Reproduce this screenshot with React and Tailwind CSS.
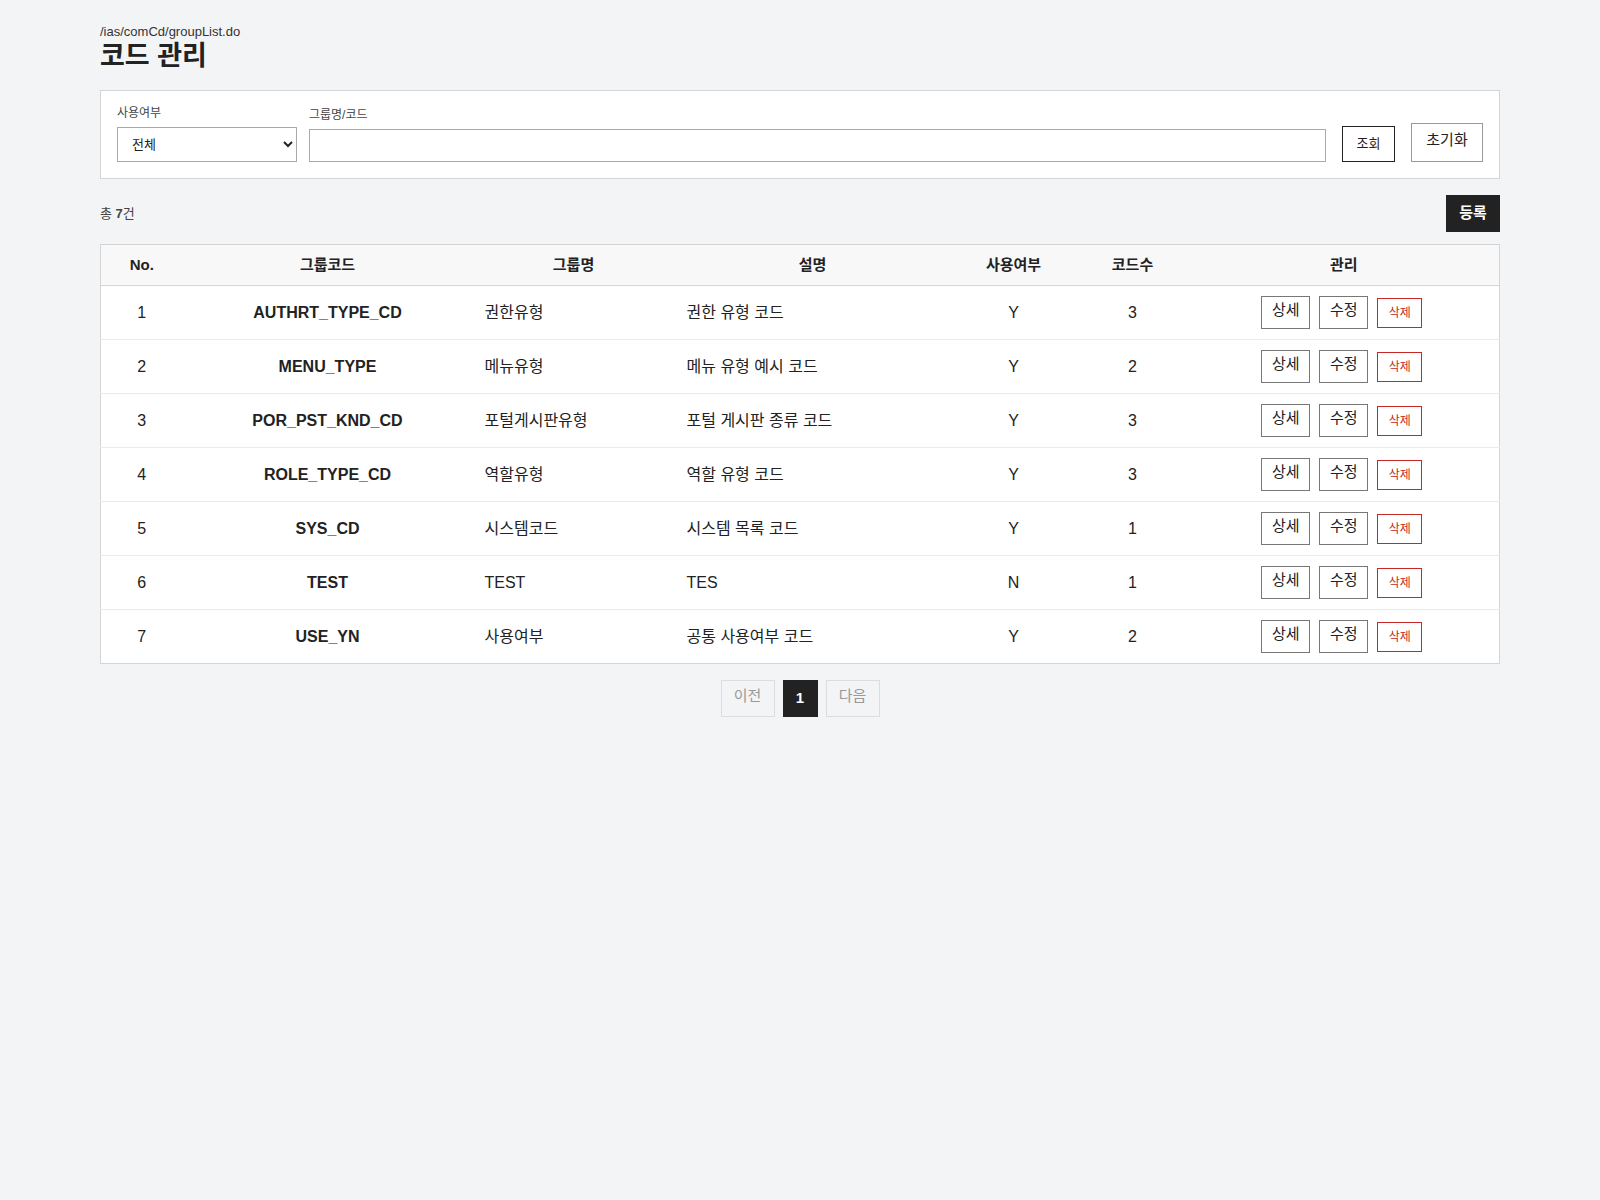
const rows = [
  [1, 'AUTHRT_TYPE_CD', '권한유형', '권한 유형 코드', 'Y', 3],
  [2, 'MENU_TYPE', '메뉴유형', '메뉴 유형 예시 코드', 'Y', 2],
  [3, 'POR_PST_KND_CD', '포털게시판유형', '포털 게시판 종류 코드', 'Y', 3],
  [4, 'ROLE_TYPE_CD', '역할유형', '역할 유형 코드', 'Y', 3],
  [5, 'SYS_CD', '시스템코드', '시스템 목록 코드', 'Y', 1],
  [6, 'TEST', 'TEST', 'TES', 'N', 1],
  [7, 'USE_YN', '사용여부', '공통 사용여부 코드', 'Y', 2],
];

export default function App() {
  return (
    <div className="min-h-[1200px] bg-[#f3f4f6] text-[#222] font-[Liberation_Sans,Noto_Sans_CJK_KR,sans-serif]">
      <div className="mx-auto w-[1400px] pt-6">
        <div className="text-[13px] leading-4 text-[#333]">/ias/comCd/groupList.do</div>
        <h1 className="text-[27px] font-bold leading-8">코드 관리</h1>

        <div className="mt-[18px] bg-white border border-[#d4d4d4] px-4 pt-3.5 pb-4 flex items-end gap-3">
          <div className="flex flex-col w-[180px]">
            <label className="text-[12px] leading-4 text-[#444] mb-1.5">사용여부</label>
            <select className="h-[35px] border border-[#aaa] px-2.5 text-[13px] bg-white">
              <option>전체</option>
            </select>
          </div>
          <div className="flex flex-col flex-1">
            <label className="text-[12px] leading-4 text-[#444] mb-1.5">그룹명/코드</label>
            <input className="h-[33px] border border-[#aaa] px-2" />
          </div>
          <button className="ml-1 h-[36px] w-[53px] border border-[#222] text-[13px] bg-white">조회</button>
          <button className="ml-1 h-[39px] w-[72px] border border-[#999] text-[15px] bg-white pb-1">초기화</button>
        </div>

        <div className="mt-4 flex items-center justify-between">
          <div className="text-[13px] text-[#444]">총 <b>7</b>건</div>
          <button className="h-[37px] w-[54px] bg-[#222] text-white text-[15px] font-bold">등록</button>
        </div>

        <table className="mt-3 w-full border border-[#d4d4d4] bg-white border-collapse text-[16px]">
          <thead>
            <tr className="bg-[#f8f8f8] h-[41px] border-b border-[#d4d4d4] text-[15px] font-bold">
              <th className="w-[82px]">No.</th>
              <th className="w-[290px]">그룹코드</th>
              <th className="w-[202px]">그룹명</th>
              <th className="w-[276px]">설명</th>
              <th className="w-[126px]">사용여부</th>
              <th className="w-[112px]">코드수</th>
              <th>관리</th>
            </tr>
          </thead>
          <tbody>
            {rows.map((r) => (
              <tr key={r[0]} className="h-[54px] border-b border-[#ebebeb] last:border-b-0">
                <td className="text-center">{r[0]}</td>
                <td className="text-center font-bold">{r[1]}</td>
                <td className="px-3">{r[2]}</td>
                <td className="px-3">{r[3]}</td>
                <td className="text-center">{r[4]}</td>
                <td className="text-center">{r[5]}</td>
                <td>
                  <div className="flex justify-center items-center gap-[9px] pr-1">
                    <button className="h-[33px] w-[49px] border border-[#777] text-[15px] bg-white pb-1">상세</button>
                    <button className="h-[33px] w-[49px] border border-[#777] text-[15px] bg-white pb-1">수정</button>
                    <button className="h-[30px] w-[45px] border border-[#c62828] text-[#c62828] text-[12px] bg-white">삭제</button>
                  </div>
                </td>
              </tr>
            ))}
          </tbody>
        </table>

        <div className="mt-4 flex justify-center gap-2">
          <button className="h-[37px] w-[54px] border border-[#ddd] text-[#999] text-[15px] pb-1">이전</button>
          <button className="h-[37px] w-[35px] bg-[#222] text-white text-[15px] font-bold">1</button>
          <button className="h-[37px] w-[54px] border border-[#ddd] text-[#999] text-[15px] pb-1">다음</button>
        </div>
      </div>
    </div>
  );
}
